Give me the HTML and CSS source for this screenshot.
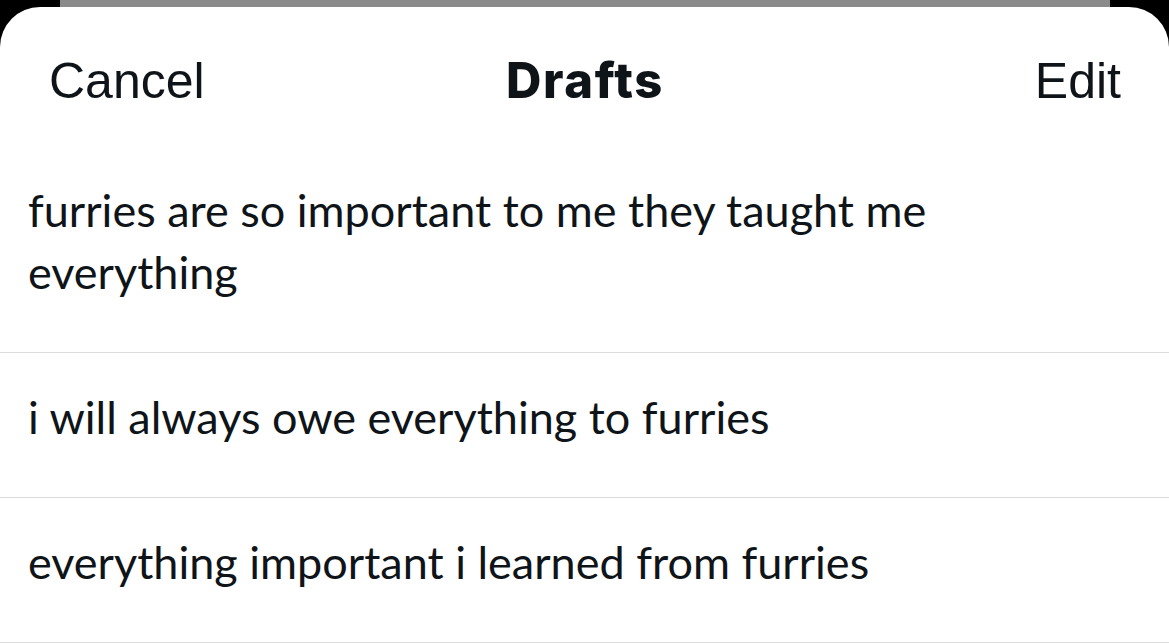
FILE: index.html
```html
<!DOCTYPE html>
<html lang="en">
<head>
<meta charset="utf-8">
<title>Drafts</title>
<link rel="stylesheet" href="styles.css">
</head>
<body>
  <div class="screen">
    <div class="behind"></div>
    <div class="sheet">
      <header class="topbar">
        <span class="btn btn-left">Cancel</span>
        <span class="title">Drafts</span>
        <span class="btn btn-right">Edit</span>
      </header>
      <ul class="drafts">
        <li class="draft"><p class="draft-text">furries are so important to me they taught me everything</p></li>
        <li class="draft"><p class="draft-text">i will always owe everything to furries</p></li>
        <li class="draft"><p class="draft-text">everything important i learned from furries</p></li>
      </ul>
    </div>
  </div>
</body>
</html>
```
FILE: styles.css
```css
html, body {
  margin: 0;
  padding: 0;
  background: #000;
}
.screen {
  width: 1169px;
  height: 644px;
  overflow: hidden;
  display: flex;
  flex-direction: column;
  background: #000;
}
.behind {
  height: 7px;
  margin: 0 59px 0 60px;
  background: #8a8a8a;
  flex: none;
}
.sheet {
  flex: 1;
  background: #fff;
  border-radius: 40px 40px 0 0;
  color: #0f1419;
}
.topbar {
  height: 139px;
  display: grid;
  grid-template-columns: 1fr auto 1fr;
  align-items: center;
  padding: 0 48px 0 49px;
  box-sizing: border-box;
  font-family: "Liberation Sans", Arial, sans-serif;
  font-size: 50px;
  padding-top: 8px;
}
.btn-left { justify-self: start; }
.btn-right { justify-self: end; }
.title {
  font-family: Inter, "Liberation Sans", sans-serif;
  font-weight: 800;
  font-size: 49px;
  letter-spacing: 1.6px;
}
.drafts {
  list-style: none;
  margin: 0;
  padding: 0;
}
.draft {
  padding: 33px 28px 49px 28px;
  border-bottom: 1px solid #dcdcdc;
}
.draft-text {
  margin: 0;
  max-width: 960px;
  font-family: Lato, "Noto Sans", sans-serif;
  font-size: 45px;
  line-height: 62px;
}
```
